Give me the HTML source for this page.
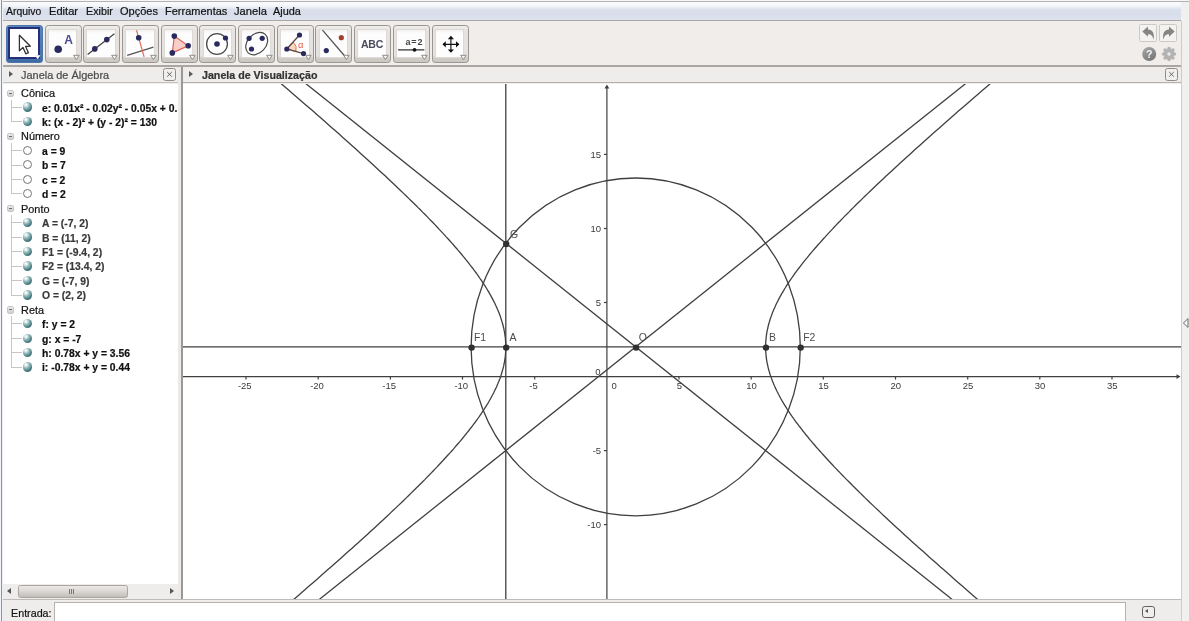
<!DOCTYPE html>
<html><head><meta charset="utf-8"><title>GeoGebra</title>
<style>
*,*:before,*:after{box-sizing:border-box;margin:0;padding:0}
html,body{width:1189px;height:621px;overflow:hidden;background:#fff;font-family:"Liberation Sans",sans-serif;font-size:12px;color:#222}
#app{filter:blur(0.4px);position:absolute;left:0;top:0;width:1189px;height:621px;background:#f0edeb;overflow:hidden}
#topline{position:absolute;left:0;top:0;width:1189px;height:2px;background:linear-gradient(#f6f6f6 0,#f6f6f6 0.8px,#adadad 0.8px,#b5b5b5 2px)}
#leftline{position:absolute;left:0;top:0;width:3px;height:621px;background:linear-gradient(90deg,#f5f7fa 0,#eef1f6 1.25px,#8195af 1.25px,#8195af 2.45px,#eef0f3 2.45px,#f3f3f3 3px)}
#rightstrip{position:absolute;left:1181px;top:0;width:8px;height:621px;background:#f1f0ef}
#rightstrip:before{content:"";position:absolute;left:-0.5px;top:21px;width:1.6px;height:600px;background:#cfccc9}
#menubar{position:absolute;left:3px;top:2px;width:1178px;height:19px;background:linear-gradient(#fcfcfd 0,#f4f6fa 22%,#dadfec 42%,#d8deeb 70%,#dde2ee 100%);border-bottom:1.3px solid #a8a8a8}
#menubar span{position:absolute;top:2px;font-size:12px;color:#222;white-space:nowrap}
#toolbar{position:absolute;left:3px;top:21px;width:1178px;height:46px;background:#f0edeb}
#tbline{position:absolute;z-index:4;left:3px;top:65px;width:1178px;height:3px;background:linear-gradient(rgba(0,0,0,0) 0.3px,#a9a6a3 0.3px,#a9a6a3 1.55px,rgba(0,0,0,0) 1.55px)}
.tbtn{position:absolute;top:24.8px;width:37px;height:38.1px;border:1.2px solid #9a9793;border-radius:3.2px;background:linear-gradient(#f1efed 0,#e6e3e0 12%,#e4e1de 82%,#cfccc8 90%,#cbc8c4 100%);overflow:hidden}
.tbtn:before{content:"";position:absolute;left:3.3px;top:4.6px;width:27.6px;height:26.6px;background:linear-gradient(#f3f2f1 0,#fdfdfd 12%,#fdfdfd 100%);box-shadow:0 0 0 1px #dcd9d6}
.tbtn svg{position:absolute;left:-1px;top:-1.1px}
.tbtn.sel{border:1.2px solid #4a76ad;border-radius:3px;background:linear-gradient(#5a86bb 0,#4674ac 85%,#3d6aa2 100%)}
.tbtn.sel:before{left:1.6px;top:1.2px;width:32px;height:32.4px;background:#fff;border:2.3px solid #272f78;box-shadow:none}
#hdrL{position:absolute;left:3px;top:66px;width:175px;height:17.4px;background:#efedeb;border-bottom:1px solid #c4c1be}
#hdrR{position:absolute;left:183px;top:66px;width:998px;height:17.4px;background:#efedeb;border-bottom:1px solid #b3b0ad}
.hdrtxt{position:absolute;top:1px;font-size:12px;white-space:nowrap;color:#4a4a4a}
.tri{position:absolute;top:5.4px;width:0;height:0;border-left:4.6px solid #5a5a5a;border-top:3.3px solid transparent;border-bottom:3.3px solid transparent}
.xbtn{position:absolute;top:2.2px;width:13px;height:12.5px;border:1px solid #8f8c8a;border-radius:2.5px;background:#f1efee}
.xbtn svg{position:absolute;left:0;top:0}
#divider{position:absolute;left:178px;top:66px;width:5px;height:534px;background:#eceae8}
#divider:after{content:"";position:absolute;left:3px;top:0;width:2px;height:534px;background:#9a9794}
#alg{position:absolute;left:3px;top:84px;width:175px;height:516px;background:#fff;overflow:hidden}
.t{position:absolute;z-index:5;white-space:nowrap;line-height:14px;transform-origin:0 50%;color:#141414;-webkit-text-stroke:0.22px currentColor}
.minus{position:absolute;width:7.4px;height:7.4px;border:1px solid #c6c6c6;border-radius:2px;background:linear-gradient(#ececec,#cfcfcf)}
.minus:after{content:"";position:absolute;left:1.2px;top:2.2px;width:3px;height:1px;background:#6a6a6a}
.vl{position:absolute;width:1px;background:#c6c6c6}
.hl{position:absolute;width:11.5px;height:1px;background:#c6c6c6}
.ball{position:absolute;width:9.4px;height:9.4px;border-radius:50%;background:radial-gradient(circle at 33% 28%,#fff 0,#e6f1f1 12%,#9cbfc1 32%,#4c7f85 64%,#2c545a 100%)}
.ring{position:absolute;width:9px;height:9px;border-radius:50%;border:1.3px solid #747474;background:#fff}
#algmask{position:absolute;left:3px;top:84px;width:175px;height:516px;pointer-events:none}
#hscroll{position:absolute;left:3px;top:584px;width:175px;height:15px;background:#efedeb}
#thumb{position:absolute;left:15px;top:0.5px;width:109.5px;height:13.5px;border:1px solid #a9a6a3;border-radius:2.5px;background:linear-gradient(#ebe9e7 0,#dedbd8 40%,#cac7c3 82%,#c0bdb9 100%)}
#graph{position:absolute;left:183px;top:84px;width:998px;height:516px;background:#fff;overflow:hidden}
.gsvg{position:absolute;left:-1px;top:0}
#bottomline{position:absolute;left:3px;top:598.6px;width:1178px;height:1.5px;background:#bebbb8}
#inputbar{position:absolute;left:3px;top:601px;width:1178px;height:20px;background:#efedeb}
#inputbar .lbl{position:absolute;left:8px;top:3px;font-size:12px;color:#222}
#inputfld{position:absolute;left:50.5px;top:1px;width:1072px;height:19px;background:#fff;border:1px solid #b5b2af;border-bottom:none}
#inbtn{position:absolute;left:1138.7px;top:5.4px;width:13.5px;height:11.4px;border:1.7px solid #625e5c;border-radius:2.8px;background:#f1efee}
#inbtn:after{content:"";position:absolute;left:2.6px;top:1.5px;border-right:3.4px solid #555;border-top:2.5px solid transparent;border-bottom:2.5px solid transparent}
.ubtn{position:absolute;top:24.3px;width:17.8px;height:18.2px;border:1px solid #cbc8c5;border-radius:1.5px;background:#f3f2f0}
</style></head><body>
<div id="app">
<div id="menubar">

</div>
<div id="toolbar"></div>
<span class="t" style="left:6.2px;top:3.9px;font-size:10.8px;transform:scaleX(0.964);">Arquivo</span><span class="t" style="left:49.3px;top:3.9px;font-size:10.8px;transform:scaleX(1.028);">Editar</span><span class="t" style="left:85.6px;top:3.9px;font-size:10.8px;transform:scaleX(0.996);">Exibir</span><span class="t" style="left:119.7px;top:3.9px;font-size:10.8px;transform:scaleX(1.021);">Opções</span><span class="t" style="left:164.6px;top:3.9px;font-size:10.8px;transform:scaleX(1.018);">Ferramentas</span><span class="t" style="left:233.6px;top:3.9px;font-size:10.8px;transform:scaleX(1.034);">Janela</span><span class="t" style="left:273.3px;top:3.9px;font-size:10.8px;transform:scaleX(1.010);">Ajuda</span>
<div class="tbtn sel" style="left:5.8px"><svg width="37" height="38" viewBox="0 0 37 38"><path d="M13.4 10.2 L13.4 25.8 L17 22.4 L19.8 28.8 L22.4 27.7 L19.6 21.5 L24.4 21.2 Z" fill="#fff" stroke="#333" stroke-width="1.3" stroke-linejoin="round"/><path d="M29.5 30.5 h4.4 l-2.2 3.4z" fill="#fff" stroke="#dfe4f0" stroke-width="0.8"/></svg></div>
<div class="tbtn" style="left:44.5px"><svg width="37" height="38" viewBox="0 0 37 38"><circle cx="13.2" cy="24.3" r="3.8" fill="#2a2a5e"/><text x="19.2" y="19.2" font-family="Liberation Sans, sans-serif" font-weight="bold" font-size="12" fill="#4a4a90">A</text><path d="M28.6 30.3 h5.6 l-2.8 4.3z" fill="#f6f5f4" stroke="#8f8c89" stroke-width="1"/></svg></div>
<div class="tbtn" style="left:83.2px"><svg width="37" height="38" viewBox="0 0 37 38"><line x1="4.6" y1="29.4" x2="31.4" y2="8.8" stroke="#444" stroke-width="1.3"/><circle cx="11.8" cy="23.9" r="2.8" fill="#2a2a5e"/><circle cx="23.8" cy="14.6" r="2.8" fill="#2a2a5e"/><path d="M28.6 30.3 h5.6 l-2.8 4.3z" fill="#f6f5f4" stroke="#8f8c89" stroke-width="1"/></svg></div>
<div class="tbtn" style="left:121.9px"><svg width="37" height="38" viewBox="0 0 37 38"><line x1="5.2" y1="30.3" x2="31.4" y2="22.1" stroke="#555" stroke-width="1.3"/><line x1="14.5" y1="5.1" x2="22.1" y2="31.9" stroke="#e06a55" stroke-width="1.2"/><circle cx="16.7" cy="12.8" r="2.8" fill="#2a2a5e"/><path d="M28.6 30.3 h5.6 l-2.8 4.3z" fill="#f6f5f4" stroke="#8f8c89" stroke-width="1"/></svg></div>
<div class="tbtn" style="left:160.6px"><svg width="37" height="38" viewBox="0 0 37 38"><path d="M13.3 11.1 L27.2 20.8 L11.3 27.9 Z" fill="#f7cfc8" stroke="#d9645a" stroke-width="1.2"/><circle cx="13.3" cy="11.1" r="2.8" fill="#2a2a5e"/><circle cx="27.2" cy="20.8" r="2.8" fill="#2a2a5e"/><circle cx="11.3" cy="27.9" r="2.8" fill="#2a2a5e"/><path d="M28.6 30.3 h5.6 l-2.8 4.3z" fill="#f6f5f4" stroke="#8f8c89" stroke-width="1"/></svg></div>
<div class="tbtn" style="left:199.3px"><svg width="37" height="38" viewBox="0 0 37 38"><circle cx="18" cy="19" r="10.4" fill="none" stroke="#4a4a4a" stroke-width="1.3"/><circle cx="18.0" cy="19.0" r="2.8" fill="#2a2a5e"/><circle cx="26.5" cy="13.0" r="2.6" fill="#2a2a5e"/><path d="M28.6 30.3 h5.6 l-2.8 4.3z" fill="#f6f5f4" stroke="#8f8c89" stroke-width="1"/></svg></div>
<div class="tbtn" style="left:238.0px"><svg width="37" height="38" viewBox="0 0 37 38"><ellipse cx="18.7" cy="18.6" rx="12.6" ry="9.3" transform="rotate(-47 18.7 18.6)" fill="none" stroke="#4a4a4a" stroke-width="1.2"/><circle cx="11.1" cy="13.3" r="2.6" fill="#2a2a5e"/><circle cx="24.2" cy="13.3" r="2.6" fill="#2a2a5e"/><circle cx="13.5" cy="24.0" r="2.6" fill="#2a2a5e"/><path d="M28.6 30.3 h5.6 l-2.8 4.3z" fill="#f6f5f4" stroke="#8f8c89" stroke-width="1"/></svg></div>
<div class="tbtn" style="left:276.7px"><svg width="37" height="38" viewBox="0 0 37 38"><path d="M9.8 24 L16.2 17 A9.5 9.5 0 0 1 18.9 26.6 Z" fill="#f9d9c0" stroke="#e0704a" stroke-width="1"/><path d="M22.5 10 L9.8 24 L26.5 28.6" fill="none" stroke="#5a4a4a" stroke-width="1.3"/><circle cx="22.5" cy="10.0" r="2.6" fill="#2a2a5e"/><circle cx="9.8" cy="24.0" r="2.6" fill="#2a2a5e"/><circle cx="26.5" cy="28.6" r="2.6" fill="#2a2a5e"/><text x="21" y="22.6" font-family="Liberation Sans, sans-serif" font-size="9.5" fill="#e0604a">α</text><path d="M28.6 30.3 h5.6 l-2.8 4.3z" fill="#f6f5f4" stroke="#8f8c89" stroke-width="1"/></svg></div>
<div class="tbtn" style="left:315.4px"><svg width="37" height="38" viewBox="0 0 37 38"><line x1="7.5" y1="5.1" x2="31" y2="32.5" stroke="#555" stroke-width="1.3"/><circle cx="26.3" cy="12.7" r="2.6" fill="#a0402a"/><circle cx="11.3" cy="25.6" r="2.6" fill="#2a2a5e"/><path d="M28.6 30.3 h5.6 l-2.8 4.3z" fill="#f6f5f4" stroke="#8f8c89" stroke-width="1"/></svg></div>
<div class="tbtn" style="left:354.1px"><svg width="37" height="38" viewBox="0 0 37 38"><text x="7" y="22.7" font-family="Liberation Sans, sans-serif" font-weight="bold" font-size="10.5" textLength="22.3" fill="#4a4a5e">ABC</text><path d="M28.6 30.3 h5.6 l-2.8 4.3z" fill="#f6f5f4" stroke="#8f8c89" stroke-width="1"/></svg></div>
<div class="tbtn" style="left:392.8px"><svg width="37" height="38" viewBox="0 0 37 38"><text x="12.6" y="20.4" font-family="Liberation Sans, sans-serif" font-weight="bold" font-size="9" textLength="16.8" fill="#444">a=2</text><line x1="5.1" y1="24.8" x2="31.3" y2="24.8" stroke="#333" stroke-width="1.2"/><circle cx="21.5" cy="24.8" r="1.9" fill="#111"/><path d="M28.6 30.3 h5.6 l-2.8 4.3z" fill="#f6f5f4" stroke="#8f8c89" stroke-width="1"/></svg></div>
<div class="tbtn" style="left:431.5px"><svg width="37" height="38" viewBox="0 0 37 38"><path d="M18.90 10.80 L22.00 14.20 L15.80 14.20 Z M27.40 19.30 L24.00 22.40 L24.00 16.20 Z M18.90 27.80 L15.80 24.40 L22.00 24.40 Z M10.40 19.30 L13.80 16.20 L13.80 22.40 Z" fill="#111"/><path d="M11.40 19.30 H26.40 M18.90 11.80 V26.80" stroke="#111" stroke-width="1.15"/><path d="M28.6 30.3 h5.6 l-2.8 4.3z" fill="#f6f5f4" stroke="#8f8c89" stroke-width="1"/></svg></div>
<div class="ubtn" style="left:1138.8px"><svg width="17" height="17" viewBox="0 0 17 17"><path d="M2.3 6.6 L8 1.6 V4.4 C12.8 4.4 14.6 8.6 13.6 14.6 C12.6 11 11.4 9.2 8 9.2 V11.8 Z" fill="#858585"/></svg></div>
<div class="ubtn" style="left:1159.2px"><svg width="17" height="17" viewBox="0 0 17 17"><path d="M14.7 6.6 L9 1.6 V4.4 C4.2 4.4 2.4 8.6 3.4 14.6 C4.4 11 5.6 9.2 9 9.2 V11.8 Z" fill="#858585"/></svg></div>
<svg style="position:absolute;left:1139.5px;top:44.8px" width="40" height="18" viewBox="0 0 40 18">
<defs><linearGradient id="hg" x1="0" y1="0" x2="0.6" y2="1"><stop offset="0" stop-color="#a9a9a9"/><stop offset="1" stop-color="#787878"/></linearGradient></defs>
<circle cx="9.2" cy="9" r="7" fill="url(#hg)"/><text x="9.2" y="12.8" text-anchor="middle" font-family="Liberation Sans, sans-serif" font-weight="bold" font-size="10.5" fill="#f6f6f6">?</text>
<g transform="translate(29 9)" fill="#b3b3b3"><circle r="5.3"/><circle cx="5.50" cy="0.00" r="1.75"/><circle cx="3.89" cy="3.89" r="1.75"/><circle cx="0.00" cy="5.50" r="1.75"/><circle cx="-3.89" cy="3.89" r="1.75"/><circle cx="-5.50" cy="0.00" r="1.75"/><circle cx="-3.89" cy="-3.89" r="1.75"/><circle cx="-0.00" cy="-5.50" r="1.75"/><circle cx="3.89" cy="-3.89" r="1.75"/><circle r="1.7" fill="#ecebea"/></g>
</svg>
<div id="hdrL"><span class="tri" style="left:6px"></span>
<span class="xbtn" style="left:160px"><svg width="11" height="11" viewBox="0 0 11 11"><path d="M3.2 3 L7.8 7.6 M7.8 3 L3.2 7.6" stroke="#5f5f5f" stroke-width="0.95"/></svg></span></div>
<div id="hdrR"><span class="tri" style="left:6px"></span>
<span class="xbtn" style="left:982px"><svg width="11" height="11" viewBox="0 0 11 11"><path d="M3.2 3 L7.8 7.6 M7.8 3 L3.2 7.6" stroke="#5f5f5f" stroke-width="0.95"/></svg></span></div>
<span class="t" style="left:20.8px;top:67.6px;font-size:10.8px;transform:scaleX(1.013);color:#4a4a4a;">Janela de Álgebra</span><span class="t" style="left:201.8px;top:67.6px;font-size:10.8px;transform:scaleX(0.988);font-weight:bold;color:#333;">Janela de Visualização</span>
<div id="alg">
</div>
<div id="algrows" style="position:absolute;left:0;top:0;width:178px;height:584px;overflow:hidden">
<span class="minus" style="left:7.1px;top:89.6px"></span>
<span class="t" style="left:21.1px;top:86.1px;font-size:10.8px;transform:scaleX(1.010);">Cônica</span>
<span class="vl" style="left:10.6px;top:99.7px;height:15.2px"></span>
<span class="hl" style="left:10.6px;top:106.7px"></span>
<span class="ball" style="left:22.9px;top:102.4px"></span>
<span class="t" style="left:41.7px;top:100.5px;font-size:10.8px;transform:scaleX(0.958);font-weight:bold;color:#101010;">e: 0.01x² - 0.02y² - 0.05x + 0.</span>
<span class="vl" style="left:10.6px;top:114.2px;height:7.7px"></span>
<span class="hl" style="left:10.6px;top:121.2px"></span>
<span class="ball" style="left:22.9px;top:116.9px"></span>
<span class="t" style="left:41.7px;top:114.9px;font-size:10.8px;transform:scaleX(0.958);font-weight:bold;color:#101010;">k: (x - 2)² + (y - 2)² = 130</span>
<span class="minus" style="left:7.1px;top:132.9px"></span>
<span class="t" style="left:21.1px;top:129.4px;font-size:10.8px;transform:scaleX(1.010);">Número</span>
<span class="vl" style="left:10.6px;top:143.0px;height:15.2px"></span>
<span class="hl" style="left:10.6px;top:150.1px"></span>
<span class="ring" style="left:22.7px;top:145.8px"></span>
<span class="t" style="left:41.7px;top:143.8px;font-size:10.8px;transform:scaleX(0.958);font-weight:bold;color:#101010;">a = 9</span>
<span class="vl" style="left:10.6px;top:157.5px;height:15.2px"></span>
<span class="hl" style="left:10.6px;top:164.5px"></span>
<span class="ring" style="left:22.7px;top:160.2px"></span>
<span class="t" style="left:41.7px;top:158.3px;font-size:10.8px;transform:scaleX(0.958);font-weight:bold;color:#101010;">b = 7</span>
<span class="vl" style="left:10.6px;top:171.9px;height:15.2px"></span>
<span class="hl" style="left:10.6px;top:178.9px"></span>
<span class="ring" style="left:22.7px;top:174.6px"></span>
<span class="t" style="left:41.7px;top:172.7px;font-size:10.8px;transform:scaleX(0.958);font-weight:bold;color:#101010;">c = 2</span>
<span class="vl" style="left:10.6px;top:186.4px;height:7.7px"></span>
<span class="hl" style="left:10.6px;top:193.4px"></span>
<span class="ring" style="left:22.7px;top:189.1px"></span>
<span class="t" style="left:41.7px;top:187.1px;font-size:10.8px;transform:scaleX(0.958);font-weight:bold;color:#101010;">d = 2</span>
<span class="minus" style="left:7.1px;top:205.1px"></span>
<span class="t" style="left:21.1px;top:201.6px;font-size:10.8px;transform:scaleX(1.010);">Ponto</span>
<span class="vl" style="left:10.6px;top:215.2px;height:15.2px"></span>
<span class="hl" style="left:10.6px;top:222.3px"></span>
<span class="ball" style="left:22.9px;top:218.0px"></span>
<span class="t" style="left:41.7px;top:216.0px;font-size:10.8px;transform:scaleX(0.958);font-weight:bold;color:#3a3a3a;">A = (-7, 2)</span>
<span class="vl" style="left:10.6px;top:229.7px;height:15.2px"></span>
<span class="hl" style="left:10.6px;top:236.7px"></span>
<span class="ball" style="left:22.9px;top:232.4px"></span>
<span class="t" style="left:41.7px;top:230.5px;font-size:10.8px;transform:scaleX(0.958);font-weight:bold;color:#3a3a3a;">B = (11, 2)</span>
<span class="vl" style="left:10.6px;top:244.1px;height:15.2px"></span>
<span class="hl" style="left:10.6px;top:251.1px"></span>
<span class="ball" style="left:22.9px;top:246.8px"></span>
<span class="t" style="left:41.7px;top:244.9px;font-size:10.8px;transform:scaleX(0.958);font-weight:bold;color:#3a3a3a;">F1 = (-9.4, 2)</span>
<span class="vl" style="left:10.6px;top:258.6px;height:15.2px"></span>
<span class="hl" style="left:10.6px;top:265.6px"></span>
<span class="ball" style="left:22.9px;top:261.3px"></span>
<span class="t" style="left:41.7px;top:259.3px;font-size:10.8px;transform:scaleX(0.958);font-weight:bold;color:#3a3a3a;">F2 = (13.4, 2)</span>
<span class="vl" style="left:10.6px;top:273.0px;height:15.2px"></span>
<span class="hl" style="left:10.6px;top:280.0px"></span>
<span class="ball" style="left:22.9px;top:275.7px"></span>
<span class="t" style="left:41.7px;top:273.8px;font-size:10.8px;transform:scaleX(0.958);font-weight:bold;color:#3a3a3a;">G = (-7, 9)</span>
<span class="vl" style="left:10.6px;top:287.4px;height:7.7px"></span>
<span class="hl" style="left:10.6px;top:294.5px"></span>
<span class="ball" style="left:22.9px;top:290.2px"></span>
<span class="t" style="left:41.7px;top:288.2px;font-size:10.8px;transform:scaleX(0.958);font-weight:bold;color:#3a3a3a;">O = (2, 2)</span>
<span class="minus" style="left:7.1px;top:306.2px"></span>
<span class="t" style="left:21.1px;top:302.7px;font-size:10.8px;transform:scaleX(1.010);">Reta</span>
<span class="vl" style="left:10.6px;top:316.3px;height:15.2px"></span>
<span class="hl" style="left:10.6px;top:323.3px"></span>
<span class="ball" style="left:22.9px;top:319.0px"></span>
<span class="t" style="left:41.7px;top:317.1px;font-size:10.8px;transform:scaleX(0.958);font-weight:bold;color:#101010;">f: y = 2</span>
<span class="vl" style="left:10.6px;top:330.8px;height:15.2px"></span>
<span class="hl" style="left:10.6px;top:337.8px"></span>
<span class="ball" style="left:22.9px;top:333.5px"></span>
<span class="t" style="left:41.7px;top:331.5px;font-size:10.8px;transform:scaleX(0.958);font-weight:bold;color:#101010;">g: x = -7</span>
<span class="vl" style="left:10.6px;top:345.2px;height:15.2px"></span>
<span class="hl" style="left:10.6px;top:352.2px"></span>
<span class="ball" style="left:22.9px;top:347.9px"></span>
<span class="t" style="left:41.7px;top:346.0px;font-size:10.8px;transform:scaleX(0.958);font-weight:bold;color:#101010;">h: 0.78x + y = 3.56</span>
<span class="vl" style="left:10.6px;top:359.6px;height:7.7px"></span>
<span class="hl" style="left:10.6px;top:366.7px"></span>
<span class="ball" style="left:22.9px;top:362.4px"></span>
<span class="t" style="left:41.7px;top:360.4px;font-size:10.8px;transform:scaleX(0.958);font-weight:bold;color:#101010;">i: -0.78x + y = 0.44</span>
</div>
<div id="hscroll"><span style="position:absolute;left:4px;top:4px;border-right:4px solid #555;border-top:3.5px solid transparent;border-bottom:3.5px solid transparent"></span><div id="thumb"><span style="position:absolute;left:50px;top:3px;width:1px;height:5px;background:#777;box-shadow:2px 0 0 #777,4px 0 0 #777"></span></div><span style="position:absolute;left:167px;top:4px;border-left:4px solid #555;border-top:3.5px solid transparent;border-bottom:3.5px solid transparent"></span></div>
<div id="divider"></div>
<div id="graph"><svg class="gsvg" width="999" height="516" viewBox="182 84 999 516">
<g stroke="#404040" stroke-width="1.2" fill="none">
<line x1="182" y1="376.6" x2="1179" y2="376.6"/>
<line x1="606.9" y1="86" x2="606.9" y2="600"/>
<line x1="246.0" y1="376.6" x2="246.0" y2="379.6"/>
<line x1="318.2" y1="376.6" x2="318.2" y2="379.6"/>
<line x1="390.4" y1="376.6" x2="390.4" y2="379.6"/>
<line x1="462.5" y1="376.6" x2="462.5" y2="379.6"/>
<line x1="534.7" y1="376.6" x2="534.7" y2="379.6"/>
<line x1="679.0" y1="376.6" x2="679.0" y2="379.6"/>
<line x1="751.2" y1="376.6" x2="751.2" y2="379.6"/>
<line x1="823.3" y1="376.6" x2="823.3" y2="379.6"/>
<line x1="895.5" y1="376.6" x2="895.5" y2="379.6"/>
<line x1="967.7" y1="376.6" x2="967.7" y2="379.6"/>
<line x1="1039.8" y1="376.6" x2="1039.8" y2="379.6"/>
<line x1="1112.0" y1="376.6" x2="1112.0" y2="379.6"/>
<line x1="603.9" y1="524.6" x2="606.9" y2="524.6"/>
<line x1="603.9" y1="450.6" x2="606.9" y2="450.6"/>
<line x1="603.9" y1="302.5" x2="606.9" y2="302.5"/>
<line x1="603.9" y1="228.5" x2="606.9" y2="228.5"/>
<line x1="603.9" y1="154.4" x2="606.9" y2="154.4"/>
</g>
<path d="M1180.5 376.6 l-4 -2.4 v4.8z" fill="#404040"/>
<path d="M606.9 84.5 l-2.4 4 h4.8z" fill="#404040"/>
<g stroke="#404040" stroke-width="1.3" fill="none">
<line x1="182" y1="346.9" x2="1181" y2="346.9"/>
<line x1="505.8" y1="84" x2="505.8" y2="600"/>
<line x1="29.5" y1="830.7" x2="1328.5" y2="-206.0"/>
<line x1="29.5" y1="-136.9" x2="1328.5" y2="899.8"/>
<ellipse cx="635.7" cy="346.9" rx="164.6" ry="168.9"/>
<path d="M1515.0 1041.0 L1503.8 1031.9 L1492.7 1023.0 L1481.7 1014.1 L1470.9 1005.4 L1460.3 996.8 L1449.8 988.3 L1439.4 979.9 L1429.1 971.6 L1419.0 963.4 L1409.1 955.4 L1399.2 947.4 L1389.5 939.5 L1379.9 931.7 L1370.4 924.1 L1361.1 916.5 L1351.9 909.0 L1342.8 901.6 L1333.8 894.4 L1325.0 887.2 L1316.2 880.0 L1307.6 873.0 L1299.1 866.1 L1290.7 859.3 L1282.4 852.5 L1274.2 845.8 L1266.1 839.3 L1258.2 832.8 L1250.3 826.3 L1242.5 820.0 L1234.9 813.8 L1227.3 807.6 L1219.9 801.5 L1212.5 795.5 L1205.3 789.5 L1198.1 783.6 L1191.0 777.8 L1184.1 772.1 L1177.2 766.5 L1170.4 760.9 L1163.7 755.4 L1157.1 749.9 L1150.6 744.5 L1144.1 739.2 L1137.8 734.0 L1131.5 728.8 L1125.4 723.7 L1119.3 718.7 L1113.2 713.7 L1107.3 708.7 L1101.5 703.9 L1095.7 699.1 L1090.0 694.3 L1084.4 689.7 L1078.8 685.0 L1073.4 680.5 L1068.0 676.0 L1062.6 671.5 L1057.4 667.1 L1052.2 662.7 L1047.1 658.4 L1042.1 654.2 L1037.1 650.0 L1032.2 645.9 L1027.3 641.8 L1022.6 637.8 L1017.9 633.8 L1013.2 629.8 L1008.7 625.9 L1004.1 622.1 L999.7 618.3 L995.3 614.5 L991.0 610.8 L986.7 607.2 L982.5 603.5 L978.3 600.0 L974.2 596.4 L970.2 592.9 L966.2 589.5 L962.3 586.1 L958.4 582.7 L954.6 579.4 L950.9 576.1 L947.2 572.8 L943.5 569.6 L939.9 566.5 L936.4 563.3 L932.9 560.2 L929.4 557.2 L926.0 554.1 L922.7 551.1 L919.4 548.2 L916.1 545.2 L912.9 542.4 L909.7 539.5 L906.6 536.7 L903.6 533.9 L900.5 531.1 L897.6 528.4 L894.6 525.7 L891.7 523.0 L888.9 520.4 L886.1 517.7 L883.3 515.2 L880.6 512.6 L877.9 510.1 L875.3 507.6 L872.7 505.1 L870.1 502.7 L867.6 500.2 L865.1 497.9 L862.7 495.5 L860.3 493.1 L857.9 490.8 L855.6 488.5 L853.3 486.3 L851.1 484.0 L848.9 481.8 L846.7 479.6 L844.5 477.4 L842.4 475.3 L840.4 473.1 L838.3 471.0 L836.3 468.9 L834.3 466.9 L832.4 464.8 L830.5 462.8 L828.6 460.8 L826.8 458.8 L825.0 456.8 L823.2 454.8 L821.5 452.9 L819.8 451.0 L818.1 449.1 L816.4 447.2 L814.8 445.3 L813.2 443.5 L811.7 441.7 L810.1 439.8 L808.6 438.0 L807.2 436.2 L805.7 434.5 L804.3 432.7 L802.9 431.0 L801.6 429.2 L800.3 427.5 L799.0 425.8 L797.7 424.1 L796.4 422.5 L795.2 420.8 L794.0 419.2 L792.9 417.5 L791.7 415.9 L790.6 414.3 L789.5 412.7 L788.5 411.1 L787.4 409.5 L786.4 407.9 L785.5 406.4 L784.5 404.8 L783.6 403.3 L782.7 401.8 L781.8 400.3 L780.9 398.7 L780.1 397.2 L779.3 395.7 L778.5 394.3 L777.8 392.8 L777.0 391.3 L776.3 389.8 L775.6 388.4 L775.0 386.9 L774.3 385.5 L773.7 384.1 L773.1 382.6 L772.5 381.2 L772.0 379.8 L771.5 378.4 L771.0 377.0 L770.5 375.6 L770.0 374.2 L769.6 372.8 L769.2 371.4 L768.8 370.0 L768.4 368.6 L768.1 367.3 L767.8 365.9 L767.5 364.5 L767.2 363.2 L766.9 361.8 L766.7 360.4 L766.5 359.1 L766.3 357.7 L766.2 356.4 L766.0 355.0 L765.9 353.7 L765.8 352.3 L765.7 351.0 L765.7 349.6 L765.6 348.3 L765.6 346.9 L765.6 345.6 L765.7 344.2 L765.7 342.9 L765.8 341.5 L765.9 340.2 L766.0 338.8 L766.2 337.5 L766.3 336.1 L766.5 334.8 L766.7 333.4 L766.9 332.1 L767.2 330.7 L767.5 329.3 L767.8 328.0 L768.1 326.6 L768.4 325.2 L768.8 323.8 L769.2 322.4 L769.6 321.1 L770.0 319.7 L770.5 318.3 L771.0 316.9 L771.5 315.5 L772.0 314.1 L772.5 312.6 L773.1 311.2 L773.7 309.8 L774.3 308.4 L775.0 306.9 L775.6 305.5 L776.3 304.0 L777.0 302.5 L777.8 301.1 L778.5 299.6 L779.3 298.1 L780.1 296.6 L780.9 295.1 L781.8 293.6 L782.7 292.1 L783.6 290.6 L784.5 289.0 L785.5 287.5 L786.4 285.9 L787.4 284.3 L788.5 282.8 L789.5 281.2 L790.6 279.6 L791.7 278.0 L792.9 276.3 L794.0 274.7 L795.2 273.0 L796.4 271.4 L797.7 269.7 L799.0 268.0 L800.3 266.3 L801.6 264.6 L802.9 262.9 L804.3 261.1 L805.7 259.4 L807.2 257.6 L808.6 255.8 L810.1 254.0 L811.7 252.2 L813.2 250.4 L814.8 248.5 L816.4 246.7 L818.1 244.8 L819.8 242.9 L821.5 241.0 L823.2 239.0 L825.0 237.1 L826.8 235.1 L828.6 233.1 L830.5 231.1 L832.4 229.1 L834.3 227.0 L836.3 224.9 L838.3 222.8 L840.4 220.7 L842.4 218.6 L844.5 216.4 L846.7 214.3 L848.9 212.1 L851.1 209.8 L853.3 207.6 L855.6 205.3 L857.9 203.0 L860.3 200.7 L862.7 198.4 L865.1 196.0 L867.6 193.6 L870.1 191.2 L872.7 188.7 L875.3 186.3 L877.9 183.8 L880.6 181.3 L883.3 178.7 L886.1 176.1 L888.9 173.5 L891.7 170.9 L894.6 168.2 L897.6 165.5 L900.5 162.8 L903.6 160.0 L906.6 157.2 L909.7 154.4 L912.9 151.5 L916.1 148.6 L919.4 145.7 L922.7 142.7 L926.0 139.7 L929.4 136.7 L932.9 133.6 L936.4 130.5 L939.9 127.4 L943.5 124.2 L947.2 121.0 L950.9 117.8 L954.6 114.5 L958.4 111.1 L962.3 107.8 L966.2 104.4 L970.2 100.9 L974.2 97.4 L978.3 93.9 L982.5 90.3 L986.7 86.7 L991.0 83.0 L995.3 79.3 L999.7 75.6 L1004.1 71.8 L1008.7 67.9 L1013.2 64.0 L1017.9 60.1 L1022.6 56.1 L1027.3 52.1 L1032.2 48.0 L1037.1 43.8 L1042.1 39.7 L1047.1 35.4 L1052.2 31.1 L1057.4 26.8 L1062.6 22.4 L1068.0 17.9 L1073.4 13.4 L1078.8 8.8 L1084.4 4.2 L1090.0 -0.5 L1095.7 -5.2 L1101.5 -10.0 L1107.3 -14.9 L1113.2 -19.8 L1119.3 -24.8 L1125.4 -29.8 L1131.5 -35.0 L1137.8 -40.1 L1144.1 -45.4 L1150.6 -50.7 L1157.1 -56.1 L1163.7 -61.5 L1170.4 -67.0 L1177.2 -72.6 L1184.1 -78.3 L1191.0 -84.0 L1198.1 -89.8 L1205.3 -95.7 L1212.5 -101.6 L1219.9 -107.6 L1227.3 -113.7 L1234.9 -119.9 L1242.5 -126.2 L1250.3 -132.5 L1258.2 -138.9 L1266.1 -145.4 L1274.2 -152.0 L1282.4 -158.7 L1290.7 -165.4 L1299.1 -172.2 L1307.6 -179.2 L1316.2 -186.2 L1325.0 -193.3 L1333.8 -200.5 L1342.8 -207.8 L1351.9 -215.2 L1361.1 -222.6 L1370.4 -230.2 L1379.9 -237.9 L1389.5 -245.7 L1399.2 -253.5 L1409.1 -261.5 L1419.0 -269.6 L1429.1 -277.8 L1439.4 -286.0 L1449.8 -294.4 L1460.3 -302.9 L1470.9 -311.5 L1481.7 -320.3 L1492.7 -329.1 L1503.8 -338.0 L1515.0 -347.1"/>
<path d="M-243.6 1041.0 L-232.3 1031.9 L-221.2 1023.0 L-210.3 1014.1 L-199.5 1005.4 L-188.9 996.8 L-178.3 988.3 L-168.0 979.9 L-157.7 971.6 L-147.6 963.4 L-137.6 955.4 L-127.8 947.4 L-118.1 939.5 L-108.5 931.7 L-99.0 924.1 L-89.7 916.5 L-80.5 909.0 L-71.4 901.6 L-62.4 894.4 L-53.5 887.2 L-44.8 880.0 L-36.2 873.0 L-27.6 866.1 L-19.2 859.3 L-11.0 852.5 L-2.8 845.8 L5.3 839.3 L13.3 832.8 L21.1 826.3 L28.9 820.0 L36.5 813.8 L44.1 807.6 L51.5 801.5 L58.9 795.5 L66.2 789.5 L73.3 783.6 L80.4 777.8 L87.4 772.1 L94.2 766.5 L101.0 760.9 L107.7 755.4 L114.3 749.9 L120.9 744.5 L127.3 739.2 L133.6 734.0 L139.9 728.8 L146.1 723.7 L152.2 718.7 L158.2 713.7 L164.1 708.7 L170.0 703.9 L175.7 699.1 L181.4 694.3 L187.1 689.7 L192.6 685.0 L198.1 680.5 L203.5 676.0 L208.8 671.5 L214.1 667.1 L219.2 662.7 L224.3 658.4 L229.4 654.2 L234.4 650.0 L239.3 645.9 L244.1 641.8 L248.9 637.8 L253.6 633.8 L258.2 629.8 L262.8 625.9 L267.3 622.1 L271.7 618.3 L276.1 614.5 L280.5 610.8 L284.7 607.2 L288.9 603.5 L293.1 600.0 L297.2 596.4 L301.2 592.9 L305.2 589.5 L309.1 586.1 L313.0 582.7 L316.8 579.4 L320.6 576.1 L324.3 572.8 L327.9 569.6 L331.5 566.5 L335.1 563.3 L338.6 560.2 L342.0 557.2 L345.4 554.1 L348.8 551.1 L352.1 548.2 L355.3 545.2 L358.5 542.4 L361.7 539.5 L364.8 536.7 L367.9 533.9 L370.9 531.1 L373.9 528.4 L376.8 525.7 L379.7 523.0 L382.5 520.4 L385.4 517.7 L388.1 515.2 L390.8 512.6 L393.5 510.1 L396.1 507.6 L398.7 505.1 L401.3 502.7 L403.8 500.2 L406.3 497.9 L408.7 495.5 L411.1 493.1 L413.5 490.8 L415.8 488.5 L418.1 486.3 L420.4 484.0 L422.6 481.8 L424.8 479.6 L426.9 477.4 L429.0 475.3 L431.1 473.1 L433.1 471.0 L435.1 468.9 L437.1 466.9 L439.0 464.8 L440.9 462.8 L442.8 460.8 L444.6 458.8 L446.4 456.8 L448.2 454.8 L450.0 452.9 L451.7 451.0 L453.4 449.1 L455.0 447.2 L456.6 445.3 L458.2 443.5 L459.8 441.7 L461.3 439.8 L462.8 438.0 L464.3 436.2 L465.7 434.5 L467.1 432.7 L468.5 431.0 L469.8 429.2 L471.2 427.5 L472.5 425.8 L473.7 424.1 L475.0 422.5 L476.2 420.8 L477.4 419.2 L478.6 417.5 L479.7 415.9 L480.8 414.3 L481.9 412.7 L483.0 411.1 L484.0 409.5 L485.0 407.9 L486.0 406.4 L486.9 404.8 L487.9 403.3 L488.8 401.8 L489.6 400.3 L490.5 398.7 L491.3 397.2 L492.1 395.7 L492.9 394.3 L493.7 392.8 L494.4 391.3 L495.1 389.8 L495.8 388.4 L496.5 386.9 L497.1 385.5 L497.7 384.1 L498.3 382.6 L498.9 381.2 L499.4 379.8 L500.0 378.4 L500.5 377.0 L500.9 375.6 L501.4 374.2 L501.8 372.8 L502.2 371.4 L502.6 370.0 L503.0 368.6 L503.3 367.3 L503.7 365.9 L504.0 364.5 L504.2 363.2 L504.5 361.8 L504.7 360.4 L504.9 359.1 L505.1 357.7 L505.3 356.4 L505.4 355.0 L505.5 353.7 L505.6 352.3 L505.7 351.0 L505.8 349.6 L505.8 348.3 L505.8 346.9 L505.8 345.6 L505.8 344.2 L505.7 342.9 L505.6 341.5 L505.5 340.2 L505.4 338.8 L505.3 337.5 L505.1 336.1 L504.9 334.8 L504.7 333.4 L504.5 332.1 L504.2 330.7 L504.0 329.3 L503.7 328.0 L503.3 326.6 L503.0 325.2 L502.6 323.8 L502.2 322.4 L501.8 321.1 L501.4 319.7 L500.9 318.3 L500.5 316.9 L500.0 315.5 L499.4 314.1 L498.9 312.6 L498.3 311.2 L497.7 309.8 L497.1 308.4 L496.5 306.9 L495.8 305.5 L495.1 304.0 L494.4 302.5 L493.7 301.1 L492.9 299.6 L492.1 298.1 L491.3 296.6 L490.5 295.1 L489.6 293.6 L488.8 292.1 L487.9 290.6 L486.9 289.0 L486.0 287.5 L485.0 285.9 L484.0 284.3 L483.0 282.8 L481.9 281.2 L480.8 279.6 L479.7 278.0 L478.6 276.3 L477.4 274.7 L476.2 273.0 L475.0 271.4 L473.7 269.7 L472.5 268.0 L471.2 266.3 L469.8 264.6 L468.5 262.9 L467.1 261.1 L465.7 259.4 L464.3 257.6 L462.8 255.8 L461.3 254.0 L459.8 252.2 L458.2 250.4 L456.6 248.5 L455.0 246.7 L453.4 244.8 L451.7 242.9 L450.0 241.0 L448.2 239.0 L446.4 237.1 L444.6 235.1 L442.8 233.1 L440.9 231.1 L439.0 229.1 L437.1 227.0 L435.1 224.9 L433.1 222.8 L431.1 220.7 L429.0 218.6 L426.9 216.4 L424.8 214.3 L422.6 212.1 L420.4 209.8 L418.1 207.6 L415.8 205.3 L413.5 203.0 L411.1 200.7 L408.7 198.4 L406.3 196.0 L403.8 193.6 L401.3 191.2 L398.7 188.7 L396.1 186.3 L393.5 183.8 L390.8 181.3 L388.1 178.7 L385.4 176.1 L382.5 173.5 L379.7 170.9 L376.8 168.2 L373.9 165.5 L370.9 162.8 L367.9 160.0 L364.8 157.2 L361.7 154.4 L358.5 151.5 L355.3 148.6 L352.1 145.7 L348.8 142.7 L345.4 139.7 L342.0 136.7 L338.6 133.6 L335.1 130.5 L331.5 127.4 L327.9 124.2 L324.3 121.0 L320.6 117.8 L316.8 114.5 L313.0 111.1 L309.1 107.8 L305.2 104.4 L301.2 100.9 L297.2 97.4 L293.1 93.9 L288.9 90.3 L284.7 86.7 L280.5 83.0 L276.1 79.3 L271.7 75.6 L267.3 71.8 L262.8 67.9 L258.2 64.0 L253.6 60.1 L248.9 56.1 L244.1 52.1 L239.3 48.0 L234.4 43.8 L229.4 39.7 L224.3 35.4 L219.2 31.1 L214.1 26.8 L208.8 22.4 L203.5 17.9 L198.1 13.4 L192.6 8.8 L187.1 4.2 L181.4 -0.5 L175.7 -5.2 L170.0 -10.0 L164.1 -14.9 L158.2 -19.8 L152.2 -24.8 L146.1 -29.8 L139.9 -35.0 L133.6 -40.1 L127.3 -45.4 L120.9 -50.7 L114.3 -56.1 L107.7 -61.5 L101.0 -67.0 L94.2 -72.6 L87.4 -78.3 L80.4 -84.0 L73.3 -89.8 L66.2 -95.7 L58.9 -101.6 L51.5 -107.6 L44.1 -113.7 L36.5 -119.9 L28.9 -126.2 L21.1 -132.5 L13.3 -138.9 L5.3 -145.4 L-2.8 -152.0 L-11.0 -158.7 L-19.2 -165.4 L-27.6 -172.2 L-36.2 -179.2 L-44.8 -186.2 L-53.5 -193.3 L-62.4 -200.5 L-71.4 -207.8 L-80.5 -215.2 L-89.7 -222.6 L-99.0 -230.2 L-108.5 -237.9 L-118.1 -245.7 L-127.8 -253.5 L-137.6 -261.5 L-147.6 -269.6 L-157.7 -277.8 L-168.0 -286.0 L-178.3 -294.4 L-188.9 -302.9 L-199.5 -311.5 L-210.3 -320.3 L-221.2 -329.1 L-232.3 -338.0 L-243.6 -347.1"/>
</g>
<circle cx="506.2" cy="347.6" r="3.2" fill="#303030"/>
<circle cx="766.0" cy="347.6" r="3.2" fill="#303030"/>
<circle cx="471.6" cy="347.6" r="3.2" fill="#303030"/>
<circle cx="800.7" cy="347.6" r="3.2" fill="#303030"/>
<circle cx="506.2" cy="244.0" r="3.2" fill="#303030"/>
<circle cx="636.1" cy="347.6" r="3.2" fill="#303030"/>
<g font-family="Liberation Sans, sans-serif" font-size="10.8" fill="#4c4c4c">
<text transform="translate(509.5 341.3) scale(0.97 1)">A</text>
<text transform="translate(769.1 341.3) scale(0.97 1)">B</text>
<text transform="translate(473.9 341.3) scale(0.97 1)">F1</text>
<text transform="translate(803.2 341.3) scale(0.97 1)">F2</text>
<text transform="translate(510.1 237.6) scale(0.97 1)">G</text>
<text transform="translate(638.8 341.3) scale(0.97 1)">O</text>
</g>
<g font-family="Liberation Sans, sans-serif" font-size="9.5" fill="#3a3a3a">
<text x="244.8" y="389.4" text-anchor="middle">-25</text>
<text x="317.0" y="389.4" text-anchor="middle">-20</text>
<text x="389.2" y="389.4" text-anchor="middle">-15</text>
<text x="461.3" y="389.4" text-anchor="middle">-10</text>
<text x="533.5" y="389.4" text-anchor="middle">-5</text>
<text x="679.3" y="389.4" text-anchor="middle">5</text>
<text x="751.5" y="389.4" text-anchor="middle">10</text>
<text x="823.6" y="389.4" text-anchor="middle">15</text>
<text x="895.8" y="389.4" text-anchor="middle">20</text>
<text x="968.0" y="389.4" text-anchor="middle">25</text>
<text x="1040.1" y="389.4" text-anchor="middle">30</text>
<text x="1112.3" y="389.4" text-anchor="middle">35</text>
<text x="601.1" y="527.9" text-anchor="end">-10</text>
<text x="601.1" y="453.9" text-anchor="end">-5</text>
<text x="601.1" y="305.8" text-anchor="end">5</text>
<text x="601.1" y="231.8" text-anchor="end">10</text>
<text x="601.1" y="157.7" text-anchor="end">15</text>
<text x="600.6" y="374.8" text-anchor="end">0</text>
<text x="611.6" y="389.4">0</text>
</g>
</svg></div>
<div id="bottomline"></div><div id="tbline"></div>
<span class="t" style="left:10.9px;top:605.5px;font-size:10.8px;transform:scaleX(0.994);">Entrada:</span>
<div id="inputbar"><div id="inputfld"></div><div id="inbtn"></div></div>
<div id="rightstrip"><svg style="position:absolute;left:0.6px;top:317.2px" width="8" height="12" viewBox="0 0 8 12"><path d="M6 1.6 L1.4 6 L6 10.4 Z" fill="#fafafa" stroke="#5a5a5a" stroke-width="0.9"/></svg></div>
<div id="topline"></div>
<div id="leftline"></div>
</div>
</body></html>
